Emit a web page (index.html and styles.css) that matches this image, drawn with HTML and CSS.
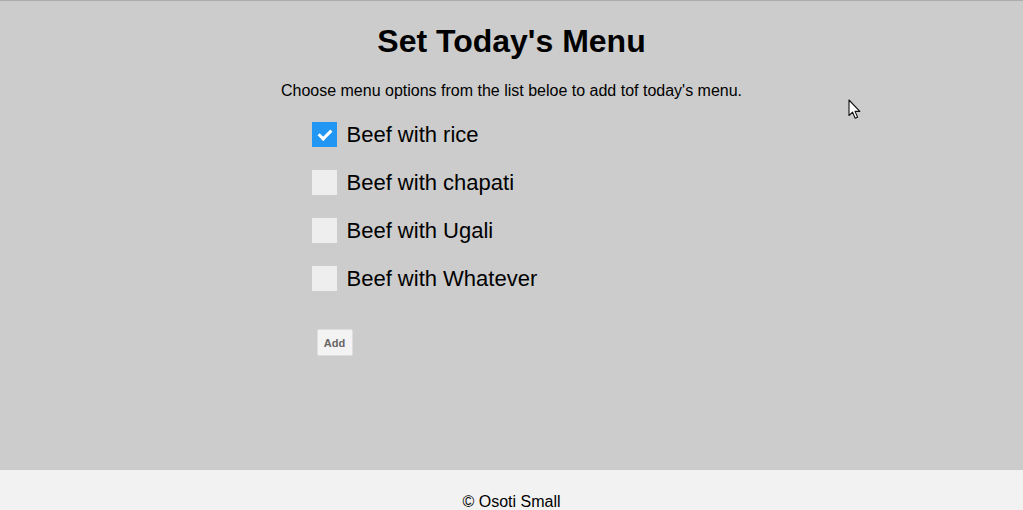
FILE: index.html
```html
<!DOCTYPE html>
<html lang="en">
<head>
<meta charset="utf-8">
<title>Set Today's Menu</title>
<link rel="stylesheet" href="styles.css">
</head>
<body>
<main class="main">
  <h1 class="title">Set Today's Menu</h1>
  <p class="intro">Choose menu options from the list beloe to add tof today's menu.</p>
  <form class="menu-form">
    <div class="options">
      <label class="option"><input type="checkbox" class="option-input" checked><span class="checkmark checked"></span><span class="option-text">Beef with rice</span></label>
      <label class="option"><input type="checkbox" class="option-input"><span class="checkmark"></span><span class="option-text">Beef with chapati</span></label>
      <label class="option"><input type="checkbox" class="option-input"><span class="checkmark"></span><span class="option-text">Beef with Ugali</span></label>
      <label class="option"><input type="checkbox" class="option-input"><span class="checkmark"></span><span class="option-text">Beef with Whatever</span></label>
    </div>
    <button type="button" class="add-btn">Add</button>
  </form>
  <svg class="cursor" width="14" height="22" viewBox="0 0 14 22" aria-hidden="true">
    <path d="M1 1 L1 16.5 L4.6 13.2 L7.2 19.2 L9.6 18.2 L7 12.4 L11.8 12.4 Z" fill="#ffffff" stroke="#111111" stroke-width="1.1" stroke-linejoin="round"/>
  </svg>
</main>
<footer class="footer">
  <p class="footer-text">© Osoti Small</p>
</footer>
</body>
</html>
```

FILE: styles.css
```css
* { box-sizing: border-box; }

html, body {
  margin: 0;
  padding: 0;
  height: 100%;
  overflow: hidden;
}

body {
  display: flex;
  flex-direction: column;
  font-family: "Liberation Sans", Arial, sans-serif;
  color: #000;
  background: #cccccc;
}

.main {
  position: relative;
  flex: 1;
  background: #cccccc;
  border-top: 1px solid #adadad;
}

.title {
  margin: 22px 0 0;
  font-size: 32px;
  line-height: 36px;
  font-weight: bold;
  text-align: center;
}

.intro {
  margin: 22px 0 0;
  font-size: 16px;
  line-height: 19px;
  text-align: center;
}

.menu-form {
  width: 400px;
  margin: 22px auto 0;
}

.options {
  display: flex;
  flex-direction: column;
  gap: 23px;
}

.option {
  display: flex;
  align-items: flex-start;
  font-size: 22px;
  line-height: 25px;
  cursor: pointer;
}

.option-input {
  position: absolute;
  opacity: 0;
  width: 0;
  height: 0;
  margin: 0;
}

.checkmark {
  position: relative;
  flex: none;
  width: 25px;
  height: 25px;
  margin-right: 10px;
  background: #eeeeee;
}

.checkmark.checked {
  background: #2196f3;
}

.checkmark.checked::after {
  content: "";
  position: absolute;
  left: 9px;
  top: 5px;
  width: 5px;
  height: 10px;
  border: solid #ffffff;
  border-width: 0 3px 3px 0;
  transform: rotate(45deg);
}

.add-btn {
  display: block;
  margin: 38px 0 0 5px;
  width: 36px;
  height: 27px;
  padding: 0;
  font-family: "Liberation Sans", Arial, sans-serif;
  font-size: 11px;
  font-weight: bold;
  color: #666666;
  background: #f3f3f3;
  border: 1px solid #dedede;
  border-radius: 2px;
}

.cursor {
  position: absolute;
  left: 848px;
  top: 98px;
}

.footer {
  flex: none;
  height: 40px;
  background: #f2f2f2;
  padding-top: 23px;
}

.footer-text {
  margin: 0;
  font-size: 16px;
  line-height: 17px;
  text-align: center;
}
```
